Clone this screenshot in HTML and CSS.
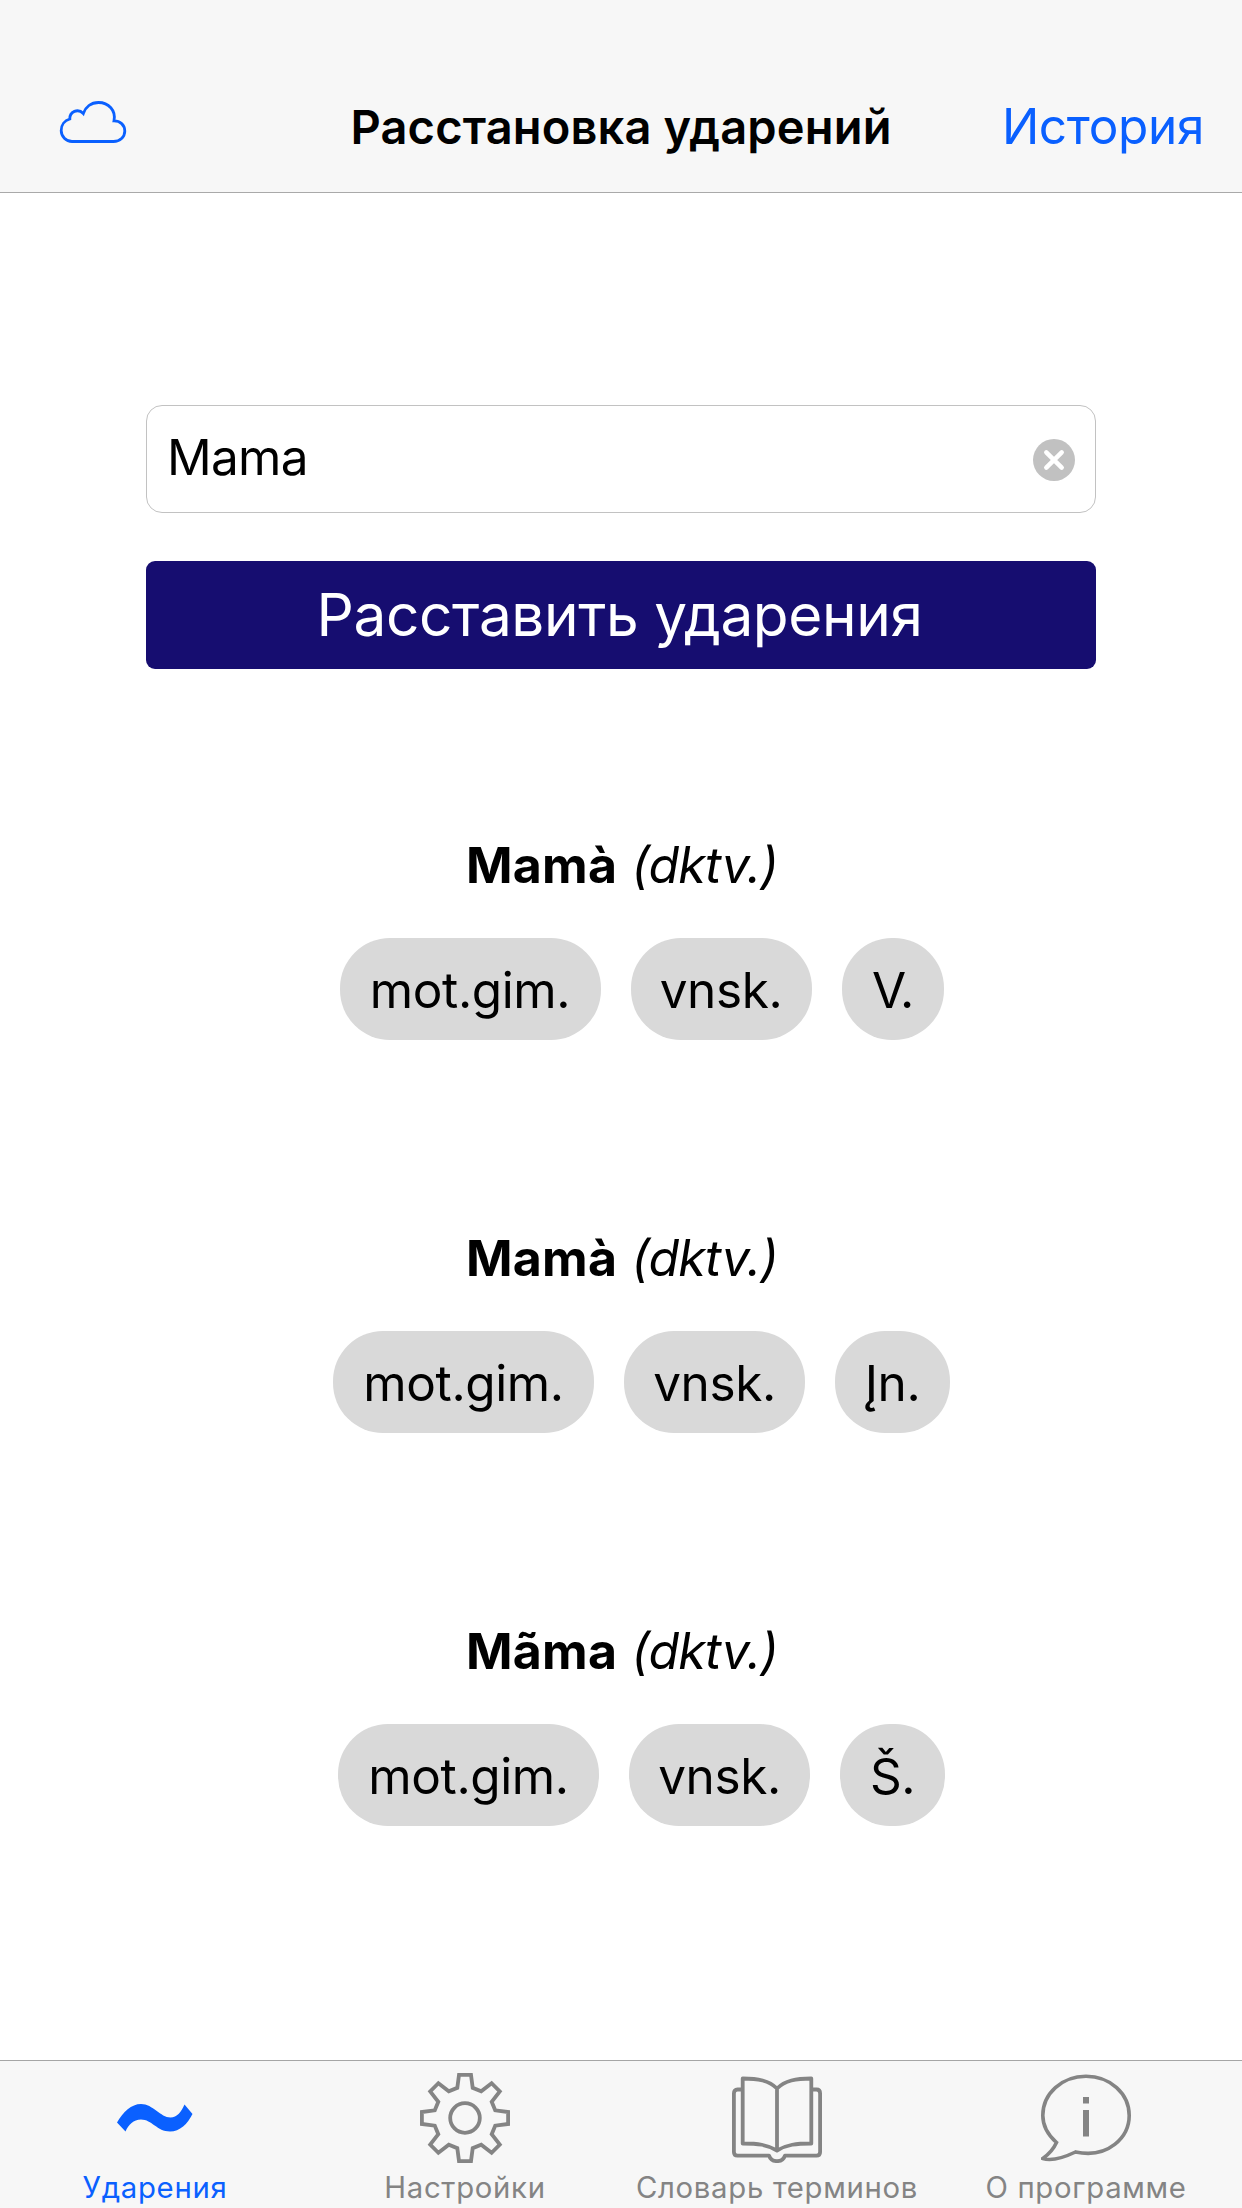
FILE: index.html
```html
<!DOCTYPE html>
<html lang="ru">
<head>
<meta charset="utf-8">
<title>Расстановка ударений</title>
<link rel="stylesheet" href="styles.css">
</head>
<body>
<div class="app">
  <header class="navbar">
    <svg class="cloud" viewBox="0 0 90 60" fill="none" stroke="#0a60ff" stroke-width="2.8">
      <path d="M22 51.5H63.5C70 51.5 74.8 47 74.8 41C74.8 35 70 30.7 64 30.8C66.2 20.500 58.500 12.500 48.500 12.500C41 12.500 35.500 17 33.300 23.500C28 18 19.500 21.500 19.800 29C14.500 30.500 11.200 35.200 11.200 40.500C11.200 46.500 16 51.500 22 51.500Z"/>
    </svg>
    <h1 class="navbar-title">Расстановка ударений</h1>
    <a class="navbar-link">История</a>
  </header>

  <main class="content">
    <div class="field">
      <span class="field-text">Mama</span>
      <svg class="clear" viewBox="0 0 42 42">
        <circle cx="21" cy="21" r="21" fill="#c1c1c1"/>
        <path d="M13.300 13.300L28.700 28.700M28.700 13.300L13.300 28.700" stroke="#fff" stroke-width="4.500" stroke-linecap="round"/>
      </svg>
    </div>
    <div class="submit">Расставить ударения</div>

    <section class="results">
      <article class="result">
        <h2 class="word"><b>Mamà</b> <i>(dktv.)</i></h2>
        <div class="chips"><span class="chip chip-gender">mot.gim.</span><span class="chip chip-number">vnsk.</span><span class="chip chip-v">V.</span></div>
      </article>
      <article class="result">
        <h2 class="word"><b>Mamà</b> <i>(dktv.)</i></h2>
        <div class="chips"><span class="chip chip-gender">mot.gim.</span><span class="chip chip-number">vnsk.</span><span class="chip chip-in">Įn.</span></div>
      </article>
      <article class="result">
        <h2 class="word"><b>Mãma</b> <i>(dktv.)</i></h2>
        <div class="chips"><span class="chip chip-gender">mot.gim.</span><span class="chip chip-number">vnsk.</span><span class="chip chip-s">Š.</span></div>
      </article>
    </section>
  </main>

  <nav class="tabbar">
    <a class="tab tab-active">
      <svg class="tab-icon" viewBox="0 0 90 90" fill="#0a60ff">
        <path d="M7 49.500C13 39 21.500 31 31 31C43 31 50.500 44.500 60.500 44.500C67 44.500 71.500 38.500 74.500 31.500L82.500 41C77.500 51 70 58.500 60 58.500C47 58.500 42 46.500 31 46.500C23.500 46.500 18.500 51.500 15.500 58.500Z"/>
      </svg>
      <span>Ударения</span>
    </a>
    <a class="tab">
      <svg class="tab-icon" viewBox="0 0 90 90" fill="none" stroke="#848484" stroke-width="3.800">
        <path d="M39 1.900H51L52.700 14.800L61.200 18.300L71.600 10.200L79.800 18.400L71.700 28.800L75.200 37.300L88.100 39V51L75.200 52.700L71.700 61.200L79.800 71.600L71.600 79.800L61.200 71.700L52.700 75.200L51 88.100H39L37.300 75.200L28.800 71.700L18.400 79.800L10.200 71.600L18.300 61.200L14.800 52.700L1.900 51V39L14.800 37.300L18.300 28.800L10.200 18.400L18.400 10.200L28.800 18.300L37.300 14.800Z"/>
        <circle cx="45" cy="45" r="14.800"/>
      </svg>
      <span>Настройки</span>
    </a>
    <a class="tab">
      <svg class="tab-icon" viewBox="0 0 90 90" fill="none" stroke="#848484" stroke-width="3.800" stroke-linejoin="round">
        <path d="M45 15.500C37 7.500 26 5.500 10.700 5.500V70.500C26 70.500 35 71.500 45 77.500C55 71.500 64 70.500 79.300 70.500V5.500C64 5.500 53 7.500 45 15.500ZM45 15.500V77.500"/>
        <path d="M10.700 16.500H5.500Q1.900 16.500 1.900 20.500V79Q1.900 82.600 5.500 82.600H37C39.500 90 50.500 90 53 82.600H84.500Q88.100 82.600 88.100 79V20.500Q88.100 16.500 84.500 16.500H79.300"/>
      </svg>
      <span>Словарь терминов</span>
    </a>
    <a class="tab">
      <svg class="tab-icon" viewBox="0 0 90 90" fill="none" stroke="#848484" stroke-width="3.600">
        <path d="M15.500 69.500C7 62 1.800 53.500 1.800 42.500C1.800 20.500 21 3.300 45 3.300C69 3.300 88.200 20.500 88.200 42.500C88.200 64 67.500 86 34.500 79C23 84.500 11 88.500 1.800 85.500C9.500 80 13 75 15.500 69.500Z"/>
        <path d="M45 37V63.500M45 24V30.500" stroke-width="6"/>
      </svg>
      <span>О программе</span>
    </a>
  </nav>
</div>
</body>
</html>
```
FILE: styles.css
```css
* { box-sizing: border-box; }

body {
  margin: 0;
  background: #fff;
  color: #000;
  font-family: Inter, "Liberation Sans", sans-serif;
}

.app {
  display: flex;
  flex-direction: column;
  height: 2208px;
}

.navbar {
  display: grid;
  grid-template-columns: 310px 1fr 310px;
  align-items: center;
  height: 193px;
  padding: 60px 0 0;
  background: #f7f7f7;
  border-bottom: 1px solid #a9a9a9;
}

.cloud {
  width: 90px;
  height: 60px;
  margin: 0 0 12px 50px;
}

.navbar-title {
  margin: 2px 0 0;
  font-size: 47px;
  font-weight: 600;
  line-height: 60px;
  letter-spacing: 0.15px;
  text-align: center;
  white-space: nowrap;
}

.navbar-link {
  padding-right: 38px;
  color: #0a60ff;
  font-size: 49.5px;
  line-height: 60px;
  letter-spacing: -0.34px;
  text-align: right;
}

.content {
  display: flex;
  flex: 1;
  flex-direction: column;
  padding: 212px 146px 0;
}

.field {
  display: flex;
  align-items: center;
  justify-content: space-between;
  height: 108px;
  padding: 0 20.5px 0 20px;
  border: 1px solid #c2c2c2;
  border-radius: 16px;
}

.field-text {
  padding-bottom: 4px;
  font-size: 49.5px;
  line-height: 60px;
  letter-spacing: -0.7px;
}

.clear {
  width: 42px;
  height: 42px;
  margin-top: 2px;
}

.submit {
  height: 108px;
  margin-top: 48px;
  padding-right: 3px;
  border-radius: 9px;
  background: #160d70;
  color: #fff;
  font-size: 58.5px;
  line-height: 107px;
  letter-spacing: -0.4px;
  text-align: center;
}

.results {
  display: flex;
  flex-direction: column;
  gap: 188px;
  margin-top: 166px;
}

.word {
  margin: 0 0 43px;
  padding-left: 2px;
  font-size: 50px;
  font-weight: 400;
  line-height: 60px;
  letter-spacing: -0.74px;
  text-align: center;
}

.word b {
  margin-right: 1px;
  letter-spacing: 0.2px;
}

.chips {
  display: flex;
  justify-content: center;
  gap: 30px;
  padding-left: 41px;
}

.chip {
  height: 102px;
  padding-top: 1px;
  border-radius: 50px;
  background: #d9d9d9;
  font-size: 49.5px;
  line-height: 102px;
  letter-spacing: -0.4px;
  text-align: center;
}

.chip-gender { width: 261px; }
.chip-number { width: 181px; }
.chip-v { width: 102px; letter-spacing: -1.3px; }
.chip-in { width: 115px; }
.chip-s { width: 105px; }

.tabbar {
  display: grid;
  grid-template-columns: 310px 310px 314px 304px;
  height: 148px;
  border-top: 1px solid #a5a5a5;
  background: #f7f7f7;
}

.tab {
  display: flex;
  flex-direction: column;
  align-items: center;
  padding-top: 12px;
  color: #848484;
  font-size: 29.3px;
  line-height: 36px;
  letter-spacing: 0.7px;
  white-space: nowrap;
}

.tab-active { color: #0a60ff; }

.tab-icon {
  width: 90px;
  height: 90px;
  margin-bottom: 7px;
}
```
